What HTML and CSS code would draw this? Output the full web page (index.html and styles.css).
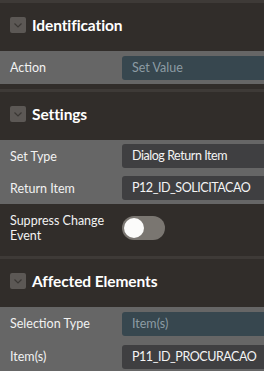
FILE: index.html
```html
<!DOCTYPE html>
<html>
<head>
<meta charset="utf-8">
<link rel="stylesheet" href="styles.css">
</head>
<body>
<div class="panel">
  <section class="group">
    <div class="group-head">
      <span class="chev"><svg width="16" height="16" viewBox="0 0 16 16"><path d="M4.5 6.5 L8 10 L11.5 6.5" fill="none" stroke="#3a3734" stroke-width="1.2"/></svg></span>
      <h2>Identification</h2>
    </div>
    <div class="row hl">
      <div class="label">Action</div>
      <div class="field"><div class="input ro">Set Value</div></div>
    </div>
  </section>
  <section class="group">
    <div class="group-head">
      <span class="chev"><svg width="16" height="16" viewBox="0 0 16 16"><path d="M4.5 6.5 L8 10 L11.5 6.5" fill="none" stroke="#3a3734" stroke-width="1.2"/></svg></span>
      <h2>Settings</h2>
    </div>
    <div class="row hl r32">
      <div class="label">Set Type</div>
      <div class="field"><div class="input">Dialog Return Item</div></div>
    </div>
    <div class="row hl r32">
      <div class="label">Return Item</div>
      <div class="field"><div class="input">P12_ID_SOLICITACAO</div></div>
    </div>
    <div class="row tall">
      <div class="label">Suppress Change Event</div>
      <div class="field"><span class="toggle"><span class="knob"></span></span></div>
    </div>
  </section>
  <section class="group">
    <div class="group-head">
      <span class="chev"><svg width="16" height="16" viewBox="0 0 16 16"><path d="M4.5 6.5 L8 10 L11.5 6.5" fill="none" stroke="#3a3734" stroke-width="1.2"/></svg></span>
      <h2>Affected Elements</h2>
    </div>
    <div class="row hl">
      <div class="label">Selection Type</div>
      <div class="field"><div class="input ro">Item(s)</div></div>
    </div>
    <div class="row hl">
      <div class="label">Item(s)</div>
      <div class="field"><div class="input">P11_ID_PROCURACAO</div></div>
    </div>
  </section>
</div>
</body>
</html>
```
FILE: styles.css
```css
html, body {
  margin: 0;
  padding: 0;
  background: #312d2a;
  font-family: Lato, "Noto Sans", sans-serif;
  color: #f2f2f2;
  overflow: hidden;
}
.panel {
  width: 264px;
}
.group {
  border-top: 3px solid #3e3a37;
  padding-bottom: 5px;
  background: #312d2a;
}
.group-head {
  height: 48px;
  box-sizing: border-box;
  padding-bottom: 4px;
  display: flex;
  align-items: center;
  padding-left: 10px;
  gap: 6px;
}
.chev {
  width: 16px;
  height: 16px;
  background: #5c5855;
  border-radius: 2px;
  display: flex;
}
.group-head h2 {
  margin: 0;
  font-size: 15.5px;
  font-weight: 700;
  color: #ffffff;
  letter-spacing: -0.1px;
}
.row {
  display: flex;
  align-items: center;
  min-height: 33px;
}
.row.r32 {
  min-height: 32px;
}
.row.hl {
  background: #666666;
}
.row.tall {
  min-height: 47px;
}
.label {
  width: 100px;
  padding-left: 10px;
  padding-right: 12px;
  font-size: 12.5px;
  line-height: 15px;
  flex-shrink: 0;
}
.field {
  flex: 1;
  display: flex;
  align-items: center;
}
.input {
  flex: 1;
  height: 24px;
  line-height: 24px;
  background: #3f3f41;
  border-radius: 3px 0 0 3px;
  padding-left: 10px;
  font-size: 12.5px;
  letter-spacing: -0.45px;
  color: #f4f4f4;
  white-space: nowrap;
}
.input.ro {
  background: #37474f;
  color: #8d9ca4;
  letter-spacing: 0;
}
.toggle {
  width: 43px;
  height: 24px;
  border-radius: 12px;
  background: #7a7671;
  display: flex;
  align-items: center;
  padding-left: 2px;
  box-sizing: border-box;
}
.knob {
  width: 20px;
  height: 20px;
  border-radius: 50%;
  background: #fbfbfa;
}
```
